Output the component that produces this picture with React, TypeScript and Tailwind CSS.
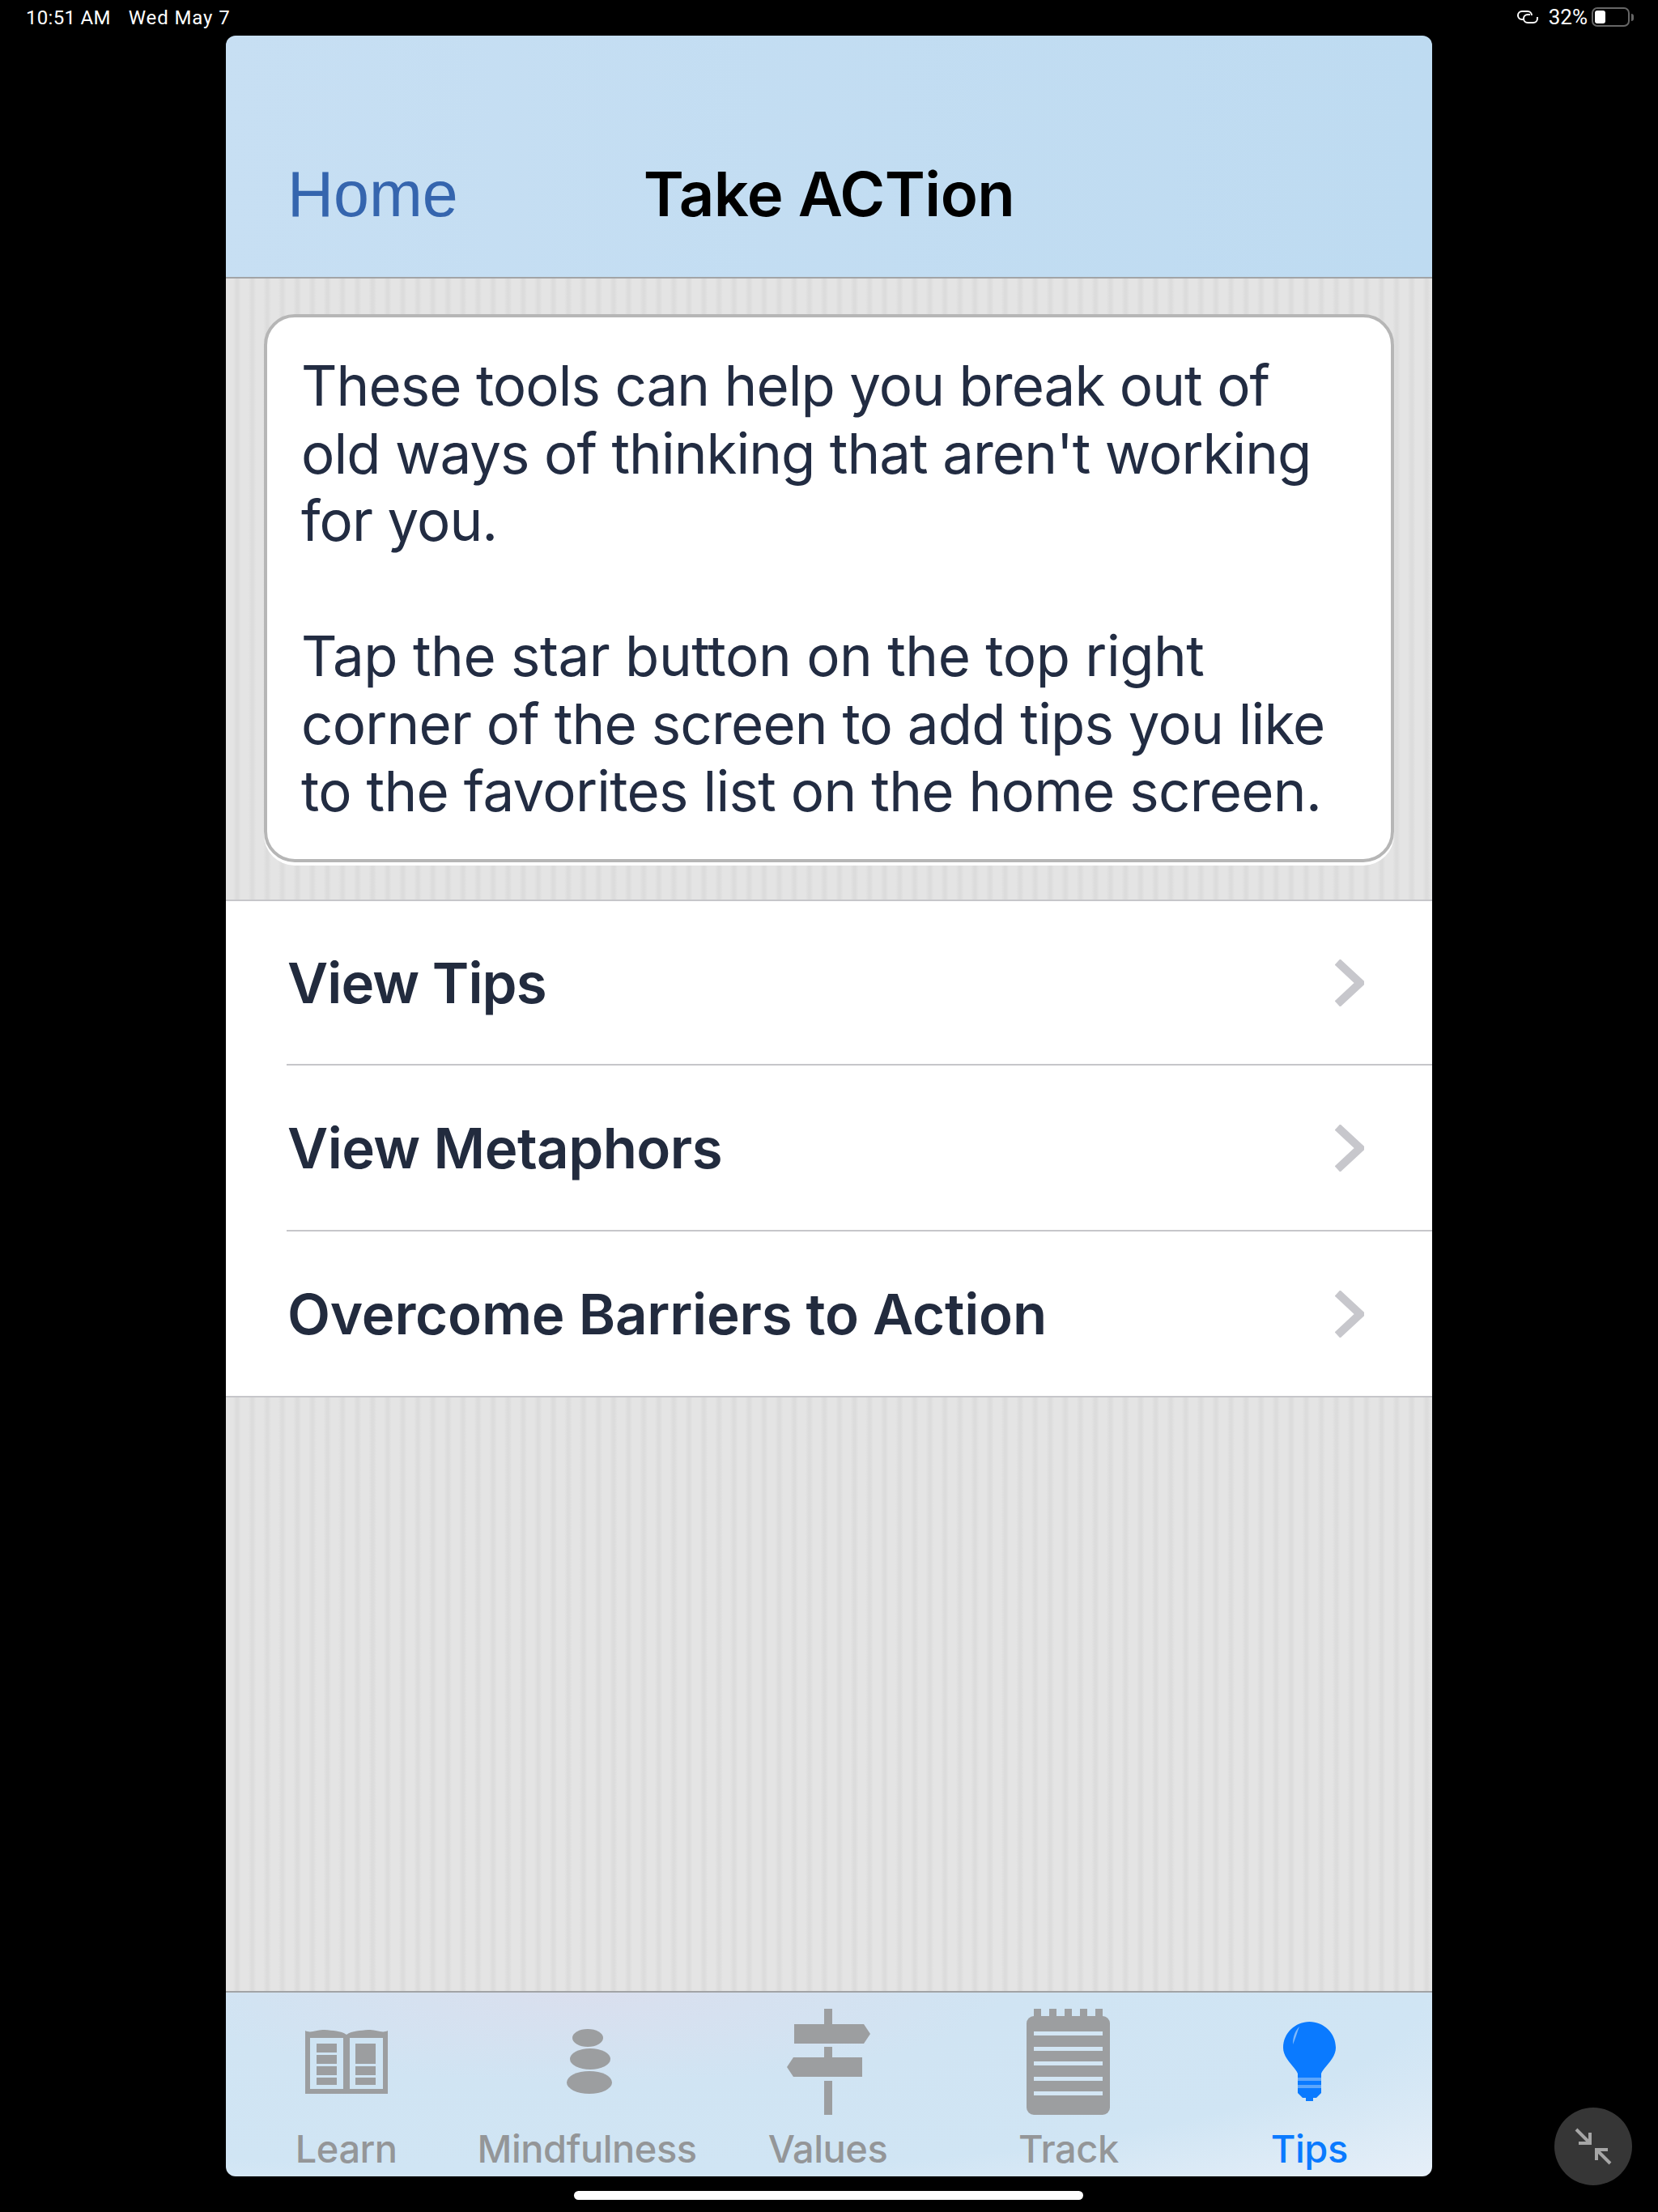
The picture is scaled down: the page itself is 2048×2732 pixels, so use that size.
import React from 'react'

const stripes = 'bg-[repeating-linear-gradient(90deg,#e4e4e4_0px,#e4e4e4_9px,#dcdcdc_13px,#dcdcdc_15px,#e4e4e4_18.6px)]'

const BookIcon = () => (
  <svg width="102" height="80" viewBox="0 0 102 80" fill="none">
    <path d="M0 2 C8 6 14 0 24 1 C34 2 44 2 51 7 C58 2 68 2 78 1 C88 0 94 6 102 2 V80 H0 Z" fill="#9c9ea0" />
    <rect x="6" y="11" width="41" height="63" fill="#cfe4f3" />
    <rect x="55" y="11" width="41" height="63" fill="#cfe4f3" />
    <rect x="14" y="18" width="25" height="11" fill="#9c9ea0" />
    <rect x="14" y="32" width="25" height="11" fill="#9c9ea0" />
    <rect x="14" y="46" width="25" height="11" fill="#9c9ea0" />
    <rect x="14" y="60" width="25" height="9" fill="#9c9ea0" />
    <rect x="62" y="18" width="25" height="25" fill="#9c9ea0" />
    <rect x="62" y="46" width="25" height="11" fill="#9c9ea0" />
    <rect x="62" y="60" width="25" height="9" fill="#9c9ea0" />
  </svg>
)

const StonesIcon = () => (
  <svg width="56" height="80" viewBox="0 0 56 80" fill="#9c9ea0" className="ml-[6px]">
    <ellipse cx="26" cy="11" rx="19" ry="11" />
    <ellipse cx="29" cy="37" rx="25" ry="13" />
    <ellipse cx="28" cy="66" rx="28" ry="14" />
  </svg>
)

const SignIcon = () => (
  <svg width="103" height="131" viewBox="0 0 103 131" fill="#9c9ea0" className="ml-[3px]">
    <rect x="46" y="0" width="10" height="20" />
    <path d="M9 19 H95 L103 31 L95 43 H9 Z" />
    <rect x="46" y="47" width="10" height="14" />
    <path d="M8 60 H93 V84 H8 L0 72 Z" />
    <rect x="46" y="89" width="10" height="42" />
  </svg>
)

const TrackIcon = () => (
  <svg width="103" height="131" viewBox="0 0 103 131" fill="#9c9ea0">
    <rect x="9" y="0" width="9" height="12" />
    <rect x="28" y="0" width="9" height="12" />
    <rect x="47" y="0" width="9" height="12" />
    <rect x="66" y="0" width="9" height="12" />
    <rect x="85" y="0" width="9" height="12" />
    <rect x="0" y="9" width="103" height="122" rx="9" />
    <g fill="#d3e6f4">
      <rect x="9" y="28" width="85" height="5" />
      <rect x="9" y="47" width="85" height="5" />
      <rect x="9" y="65" width="85" height="5" />
      <rect x="9" y="84" width="85" height="5" />
      <rect x="9" y="102" width="85" height="5" />
    </g>
  </svg>
)

const BulbIcon = () => (
  <svg width="65" height="98" viewBox="0 0 65 98">
    <path d="M32.5 0 C50 0 65 14 65 32 C65 46 50 56 47 64 H18 C15 56 0 46 0 32 C0 14 15 0 32.5 0 Z" fill="#0a7aff" />
    <path d="M12 28 C12 18 15 11 20 6 C17 14 15 21 12 28 Z" fill="#7fb8fa" />
    <rect x="18" y="64" width="29" height="5" fill="#0a7aff" />
    <rect x="18" y="69" width="29" height="4" fill="#5da6fb" />
    <rect x="18" y="73" width="29" height="5" fill="#0a7aff" />
    <rect x="18" y="78" width="29" height="4" fill="#5da6fb" />
    <rect x="18" y="82" width="29" height="6" fill="#0a7aff" />
    <path d="M18 88 H47 L41 94 H24 Z" fill="#0a7aff" />
    <rect x="28" y="93" width="9" height="5" fill="#0a7aff" />
  </svg>
)

const tabs = [
  { label: 'Learn', icon: <BookIcon /> },
  { label: 'Mindfulness', icon: <StonesIcon /> },
  { label: 'Values', icon: <SignIcon /> },
  { label: 'Track', icon: <TrackIcon /> },
  { label: 'Tips', icon: <BulbIcon />, active: true },
]

const rows = [
  { label: 'View Tips', height: 'h-[203px] border-b-[2px]', tracking: 'tracking-[-0.9px]' },
  { label: 'View Metaphors', height: 'h-[205px] border-b-[2px]', tracking: 'tracking-[-0.55px]' },
  { label: 'Overcome Barriers to Action', height: 'h-[203px]', tracking: 'tracking-[-0.2px]' },
]

const App = () => {
  return (
    <div className="relative w-[2048px] h-[2732px] bg-black overflow-hidden font-['Inter',sans-serif]">

      {/* Status bar */}
      <div className="h-[44px] pl-[32px] pr-[30px] flex items-center justify-between text-white text-[24px]">
        <div className="flex gap-[22px] font-['Roboto',sans-serif] tracking-[0.3px] -mt-[1px]">
          <span>10:51 AM</span>
          <span className="tracking-[0.9px]">Wed May 7</span>
        </div>
        <div className="flex items-center mt-[-2px]">
          <svg width="28" height="18" viewBox="0 0 28 18" fill="none" stroke="white" strokeWidth="2">
            <path d="M9 12 H7 A5 5 0 0 1 7 2 H14 A5 5 0 0 1 19 7" />
            <path d="M17 6 H14 A5 5 0 0 0 14 16 H21 A5 5 0 0 0 26 11 V9" />
          </svg>
          <span className="ml-[12px] text-[26px] font-['Roboto',sans-serif]">32%</span>
          <div className="ml-[5px] w-[47px] h-[24px] rounded-[7px] border-2 border-[#666666] p-[2px]">
            <div className="w-[13px] h-full rounded-[3px] bg-white" />
          </div>
          <div className="ml-[2px] w-[3px] h-[9px] rounded-r-[3px] bg-[#666666]" />
        </div>
      </div>

      {/* App window */}
      <div className="ml-[279px] w-[1490px] h-[2644px] rounded-[12px] overflow-hidden flex flex-col">

        {/* Nav */}
        <div className="h-[300px] shrink-0 relative border-b-[2px] border-[#a2a4a6] bg-gradient-to-r from-[#c7dff3] to-[#bedbf1]">
          <div className="absolute left-[76px] top-[151px] text-[79px] leading-[90px] text-[#3565ae] font-['Liberation_Sans',sans-serif]">Home</div>
          <div className="absolute inset-x-0 top-[150px] text-center text-[76px] leading-[90px] font-semibold tracking-[-0.6px] text-black">Take ACTion</div>
        </div>

        <div className={`flex-1 flex flex-col ${stripes}`}>
          {/* Intro */}
          <div className="h-[767px] shrink-0 pt-[44px] px-[47px]">
            <div className="h-[677px] rounded-[38px] border-[4px] border-[#b6b6b6] bg-white shadow-[0_4px_0_#ffffff] pt-[43px] pl-[42px] text-[69px] leading-[83.5px] tracking-[-0.95px] text-[#222c42]">
              <p>These tools can help you break out of</p>
              <p>old ways of thinking that aren't working</p>
              <p>for you.</p>
              <p className="mt-[83.5px] tracking-[-0.48px]">Tap the star button on the top right</p>
              <p className="tracking-[-0.78px]">corner of the screen to add tips you like</p>
              <p className="tracking-[-0.7px]">to the favorites list on the home screen.</p>
            </div>
          </div>

          {/* Menu */}
          <div className="bg-white border-y-[2px] border-[#c6c6ca] shrink-0">
            {rows.map(row => (
              <div key={row.label} className="pl-[75px]">
                <div className={`${row.height} pr-[84px] flex items-center justify-between border-[#c6c6ca]`}>
                  <span className={`text-[69px] ml-[1px] mt-[2px] font-semibold text-[#222b3e] ${row.tracking}`}>{row.label}</span>
                  <svg width="36" height="58" viewBox="0 0 36 58" fill="none" stroke="#c7c7cc" strokeWidth="10">
                    <path d="M3 3 L31 29 L3 55" />
                  </svg>
                </div>
              </div>
            ))}
          </div>
        </div>

        {/* Tab bar */}
        <div className="h-[229px] shrink-0 border-t-[2px] border-[#a2a4a6] pr-[3px] grid grid-cols-5 bg-[radial-gradient(ellipse_at_30%_0%,#dadfee_0%,#d0e4f3_35%,#d0e5f4_70%,#e6eff8_100%)]">
          {tabs.map(tab => (
            <div key={tab.label} className="flex flex-col items-center">
              <div className="h-[174px] flex items-center justify-center -mt-[2px]">{tab.icon}</div>
              <span className={`text-[47px] leading-[58px] font-medium tracking-[-0.5px] -mt-[8px] ${tab.active ? 'text-[#0a7aff]' : 'text-[#949698]'}`}>{tab.label}</span>
            </div>
          ))}
        </div>
      </div>

      {/* Home indicator */}
      <div className="absolute left-[709px] top-[2706px] w-[629px] h-[11px] rounded-full bg-white" />

      {/* Exit fullscreen button */}
      <div className="absolute left-[1920px] top-[2603px] w-[96px] h-[96px] rounded-full bg-[#363636] flex items-center justify-center">
        <svg width="50" height="50" viewBox="0 0 50 50" fill="none" stroke="#a6a6a6" strokeWidth="4">
          <path d="M4 4 L21 21 M21 8 V21 H7" />
          <path d="M46 46 L29 29 M29 42 V29 H43" />
        </svg>
      </div>
    </div>
  )
}

export default App
